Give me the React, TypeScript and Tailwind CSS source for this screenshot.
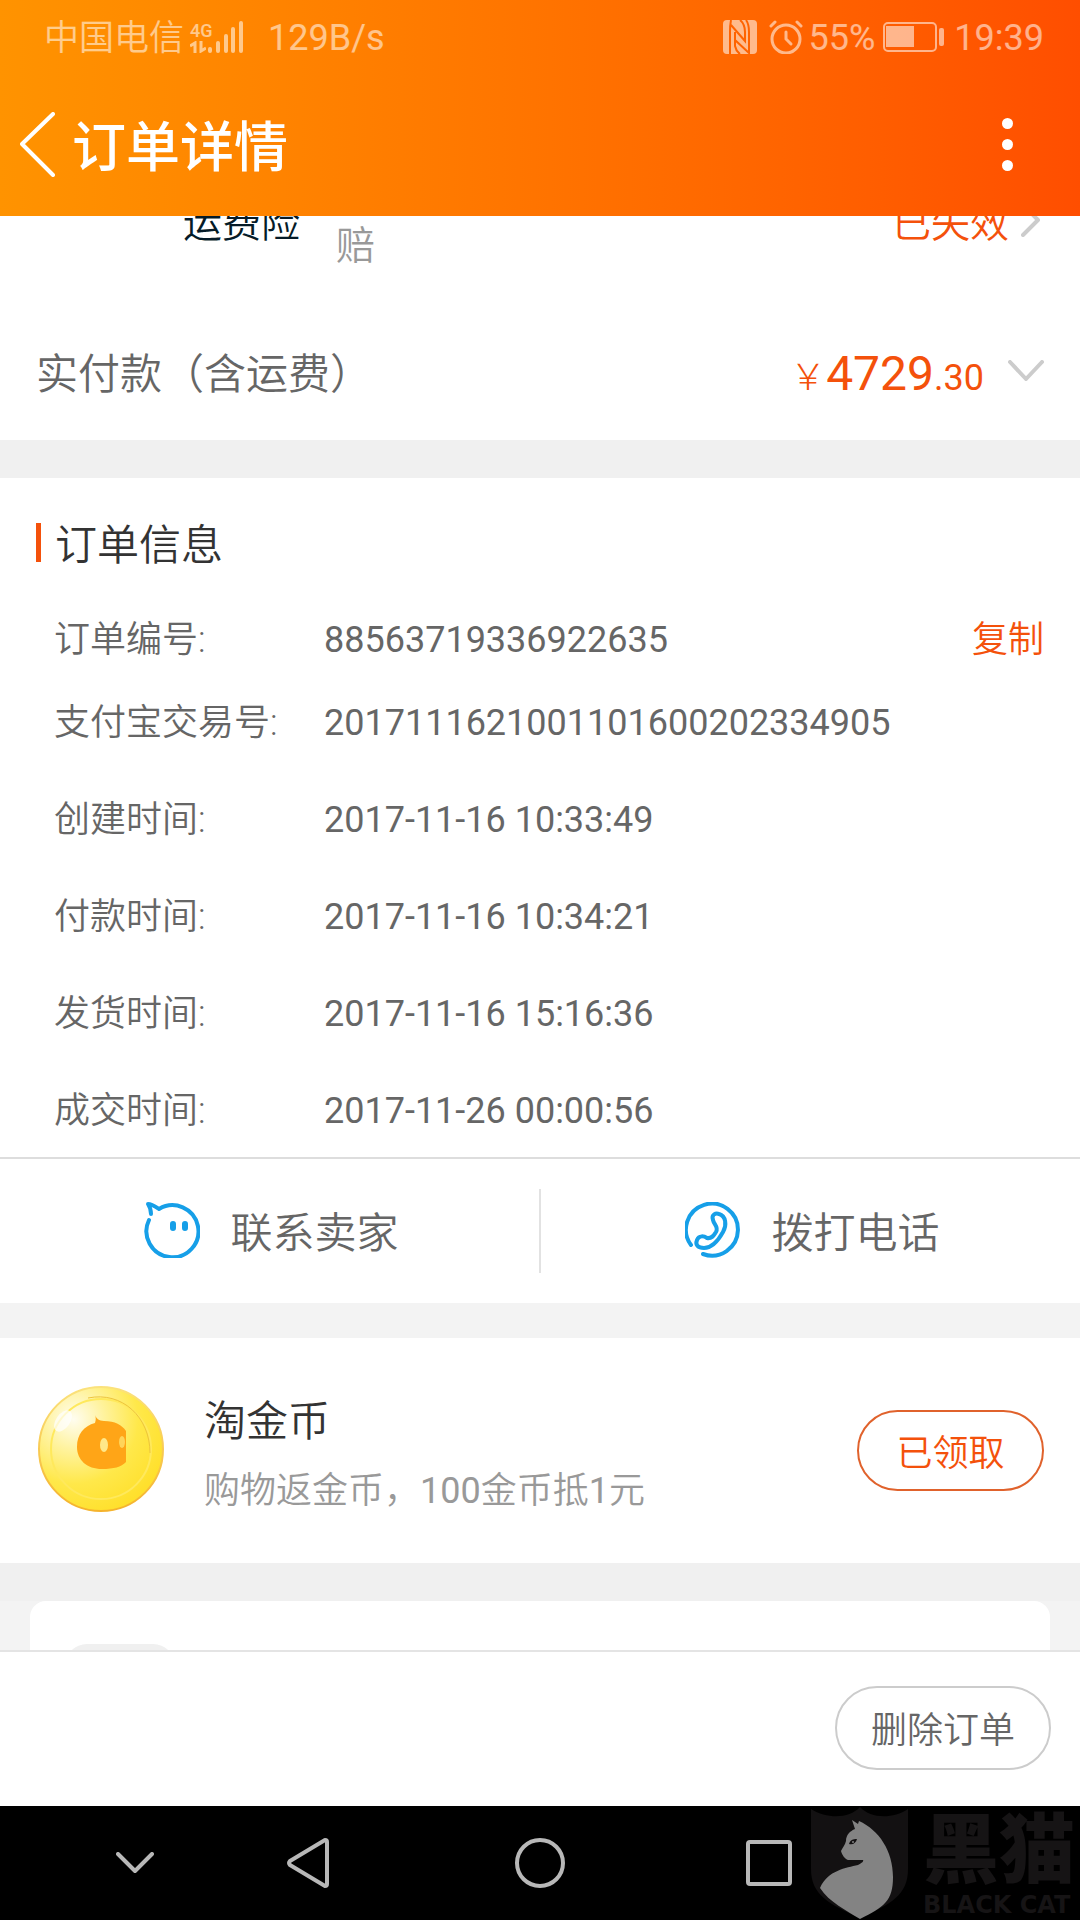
import type { ReactNode } from 'react';

interface OrderField {
  label: string;
  value: string;
  copyable?: boolean;
}

const orderFields: OrderField[] = [
  { label: '订单编号:', value: '88563719336922635', copyable: true },
  { label: '支付宝交易号:', value: '2017111621001101600202334905' },
  { label: '创建时间:', value: '2017-11-16 10:33:49' },
  { label: '付款时间:', value: '2017-11-16 10:34:21' },
  { label: '发货时间:', value: '2017-11-16 15:16:36' },
  { label: '成交时间:', value: '2017-11-26 00:00:56' },
];

function SignalIcon() {
  return (
    <svg width="36" height="34" viewBox="0 0 36 34" stroke="currentColor" strokeWidth="4" strokeLinecap="round">
      <path d="M2 31v-2M10 31v-8M18 31V16M25 31V9M33 31V3" />
    </svg>
  );
}

function NfcIcon() {
  return (
    <svg width="34" height="34" viewBox="0 0 34 34">
      <rect width="34" height="34" rx="4" fill="currentColor" />
      <path
        d="M8 0Q7 5 7 12V34M8 5L22 21V12Q22 4 17 0M12 12V20L26 33V12Q26 4 23 0M12 19V26Q13 31 17 34"
        fill="none"
        stroke="#ff6300"
        strokeWidth="2"
      />
    </svg>
  );
}

function AlarmIcon() {
  return (
    <svg width="34" height="34" viewBox="0 0 34 34" fill="none" stroke="currentColor" strokeWidth="3" strokeLinecap="round">
      <circle cx="17" cy="19" r="14" />
      <path d="M2 6L6 2M32 6L28 2" />
      <path d="M17 12v7l5 5" />
    </svg>
  );
}

function BatteryIcon() {
  return (
    <svg width="61" height="30" viewBox="0 0 61 30" fill="currentColor">
      <rect x="1" y="1" width="52" height="28" rx="4" fill="none" stroke="currentColor" strokeWidth="2" />
      <rect x="3" y="4" width="28" height="21" />
      <rect x="56" y="6" width="5" height="18" rx="2" />
    </svg>
  );
}

function ChatIcon() {
  return (
    <svg width="56" height="56" viewBox="0 0 56 56" fill="none" stroke="#169fe8" strokeWidth="4" strokeLinecap="round" strokeLinejoin="round">
      <path d="M5 18A26 26 0 1 0 15 7C12 5 8 2 4 2C6 5 7 8 7 12" />
      <path d="M29 22v4M41 22v4" strokeWidth="6" />
    </svg>
  );
}

function PhoneIcon() {
  return (
    <svg width="56" height="56" viewBox="0 0 56 56" fill="none" stroke="#169fe8" strokeWidth="4" strokeLinecap="round" strokeLinejoin="round">
      <path d="M6 43A26 26 0 1 1 18 52" />
      <path d="M28 18C26 12 31 11 34 12C41 14 42 23 38 30C33 39 26 46 19 46C13 46 10 43 12 38C14 33 19 34 22 36C27 37 29 33 31 30C34 25 29 23 28 18Z" />
    </svg>
  );
}

function CoinIcon() {
  return (
    <svg width="126" height="128" viewBox="0 0 126 128">
      <defs>
        <radialGradient id="coin" cx="0.28" cy="0.26" r="0.8">
          <stop offset="0" stopColor="#fffdf0" />
          <stop offset="0.3" stopColor="#fff3a0" />
          <stop offset="0.65" stopColor="#ffe84a" />
          <stop offset="1" stopColor="#ffe02c" />
        </radialGradient>
        <linearGradient id="rim" x1="0" y1="0" x2="0" y2="1">
          <stop offset="0" stopColor="#fbe27c" />
          <stop offset="1" stopColor="#f5b32c" />
        </linearGradient>
      </defs>
      <circle cx="63" cy="64" r="62" fill="url(#coin)" stroke="url(#rim)" strokeWidth="2" />
      <circle cx="63" cy="64" r="50" fill="none" stroke="#ffe95c" strokeWidth="2" />
      <path d="M50 13C84 6 112 32 112 68" fill="none" stroke="#edc43c" strokeWidth="1" />
      <ellipse cx="25" cy="36" rx="7" ry="12" fill="#fff" opacity="0.7" transform="rotate(35 25 36)" />
      <path d="M57 30C58 33 61 36 66 36C77 36 84 40 88 46V77C83 82 76 84 64 84C49 84 39 75 39 62C39 49 46 41 57 38C58 35 58 32 57 30Z" fill="#ffa517" />
      <ellipse cx="66" cy="60" rx="4" ry="7" fill="#ffe88a" />
      <ellipse cx="84" cy="57" rx="3" ry="6" fill="#ffd45a" />
    </svg>
  );
}

function CatShield() {
  return (
    <svg width="98" height="112" viewBox="0 0 98 112">
      <path d="M0 2C16 12 38 12 49 0C60 12 82 12 97 2V62C97 88 80 97 49 111C18 97 0 88 0 62Z" fill="#131112" />
      <path d="M41 13L47 17L48 14C68 23 82 44 82 70C82 94 73 100 49 112C36 104 18 95 9 81C17 63 35 61 47 58C51 56 53 54 52 53H37C34 52 31 48 30 44C32 40 34 38 35 34C35 28 39 24 44 22Z" fill="#838383" />
      <path d="M38 37C39 33 42 32 46 32C45 36 42 38 38 37Z" fill="#131112" />
      <circle cx="42" cy="35" r="1" fill="#838383" />
    </svg>
  );
}

function Chevron({ d, width, height, color }: { d: string; width: number; height: number; color: string }) {
  return (
    <svg width={width} height={height} viewBox={`0 0 ${width} ${height}`} fill="none" stroke={color} strokeWidth="4" strokeLinecap="round" strokeLinejoin="round">
      <path d={d} />
    </svg>
  );
}

function StatusBar() {
  return (
    <div className="flex h-[74px] items-center justify-between pl-11 pr-9 text-4xl/[42px] font-normal text-white/55">
      <div className="flex items-center">
        <span className="pt-1 text-[35px]/[42px] font-[350]">中国电信</span>
        <div className="ml-1.5 flex w-[22px] flex-col items-start">
          <span className="text-lg/[20px] font-medium">4G</span>
          <svg width="16" height="12" viewBox="0 0 16 12" fill="none" stroke="currentColor" strokeWidth="3">
            <path d="M5 12V2L0 5M11 0V10L16 7" />
          </svg>
        </div>
        <div className="-ml-1">
          <SignalIcon />
        </div>
        <span className="ml-6 pt-0.5">129B/s</span>
      </div>
      <div className="flex items-center">
        <NfcIcon />
        <span className="ml-3">
          <AlarmIcon />
        </span>
        <span className="ml-1.5 pt-0.5">55%</span>
        <span className="ml-2">
          <BatteryIcon />
        </span>
        <span className="ml-2.5 pt-0.5">19:39</span>
      </div>
    </div>
  );
}

function ActionButton({ icon, children }: { icon: ReactNode; children: ReactNode }) {
  return (
    <button type="button" className="flex h-full flex-1 items-center justify-center gap-[30px] pl-1 text-[42px]/[60px] text-[#666]">
      <span className="pb-0.5">{icon}</span>
      <span className="pt-1.5">{children}</span>
    </button>
  );
}

export default function App() {
  return (
    <div className="flex h-screen flex-col overflow-hidden bg-white font-[Roboto,'Noto_Sans_CJK_SC',sans-serif] font-[350]">
      <header className="h-[216px] shrink-0 bg-linear-to-r from-[#ff9300] to-[#ff4e00]">
        <StatusBar />
        <div className="flex h-[142px] items-center justify-between pb-0.5 pl-5 pr-[67px] text-white">
          <div className="flex items-center gap-[17px]">
            <button type="button" aria-label="返回">
              <Chevron d="M33 2L2 32L33 63" width={35} height={65} color="#fff" />
            </button>
            <h1 className="pt-2.5 text-[54px]/[72px] font-medium">订单详情</h1>
          </div>
          <button type="button" aria-label="更多" className="flex flex-col gap-2.5">
            <span className="size-[11px] rounded-full bg-white" />
            <span className="size-[11px] rounded-full bg-white" />
            <span className="size-[11px] rounded-full bg-white" />
          </button>
        </div>
      </header>

      <main className="min-h-0 flex-1 overflow-hidden bg-[#f0f0f0]">
        <section className="bg-white">
          <div className="-mt-[19px] flex h-[91px] pl-[183px] pr-10 text-[39px]/[54px]">
            <span className="w-[153px] text-[#051b28]">运费险</span>
            <span className="flex-1 self-start pt-[22px] text-[#999]">赔</span>
            <a href="#insurance" className="flex items-start gap-3 text-[#f4510b]">
              已失效
              <span className="pt-1.5">
                <Chevron d="M2 2L17 17L2 32" width={19} height={34} color="#ccc" />
              </span>
            </a>
          </div>
          <div className="flex h-[152px] items-center justify-between px-9 pt-[13px] text-[42px]/[60px] text-[#666]">
            <span className="pt-[9px]">实付款（含运费）</span>
            <button type="button" className="flex items-center gap-6 text-[#f4510b]">
              <span className="pt-[7px] text-5xl/[60px] font-normal">
                <span className="text-4xl font-light">￥</span>4729<span className="text-4xl">.30</span>
              </span>
              <Chevron d="M2 2L18 19L34 2" width={36} height={21} color="#ccc" />
            </button>
          </div>
        </section>

        <section className="mt-[38px] bg-white pt-[30px]">
          <div className="flex items-center gap-3.5 pl-9">
            <span className="h-[39px] w-[5px] bg-[#f4510b]" />
            <h2 className="pt-2 text-[42px]/[60px] text-[#333]">订单信息</h2>
          </div>
          <dl className="mt-[43px] pb-[25px] pl-[54px] pr-9 text-4xl/[42px] text-[#666]">
            {orderFields.map((field) => (
              <div key={field.label} className="mt-[55px] flex first:mt-0 nth-2:mt-[41px]">
                <dt className="w-[270px]">{field.label}</dt>
                <dd className="flex-1 font-normal">{field.value}</dd>
                {field.copyable && (
                  <dd>
                    <button type="button" className="text-[#f4510b]">复制</button>
                  </dd>
                )}
              </div>
            ))}
          </dl>
          <div className="flex h-[146px] items-center border-t-2 border-[#ddd]">
            <ActionButton icon={<ChatIcon />}>联系卖家</ActionButton>
            <span className="h-[84px] w-0.5 bg-[#e2e2e2]" />
            <ActionButton icon={<PhoneIcon />}>拨打电话</ActionButton>
          </div>
        </section>

        <div className="bg-[#f3f3f3] pt-[35px]">
          <section className="flex h-[225px] items-center bg-white pl-[38px] pr-9">
            <div className="pb-1">
              <CoinIcon />
            </div>
            <div className="ml-10 flex flex-1 flex-col gap-3.5 pt-1.5">
              <h3 className="text-[42px]/[60px] text-[#333]">淘金币</h3>
              <p className="text-4xl/[50px] text-[#999]">
                购物返金币，<span className="font-normal">100</span>金币抵<span className="font-normal">1</span>元
              </p>
            </div>
            <button type="button" className="h-[81px] w-[187px] rounded-full border-2 border-[#e0622c] pt-1.5 text-4xl text-[#f4510b]">
              已领取
            </button>
          </section>
        </div>

        {/* next card is scrolled mostly out of view */}
        <div className="mt-[38px] bg-[#f3f3f3] px-[30px]">
          <div className="h-60 rounded-2xl bg-white pl-[35px] pt-[43px]">
            <div className="size-[110px] rounded-[22px] bg-[#f0f0f0]" />
          </div>
        </div>
      </main>

      <footer className="flex h-[156px] shrink-0 items-center justify-end border-t-2 border-[#e4e4e4] pb-0.5 pr-[29px]">
        <button type="button" className="h-[84px] w-[216px] rounded-full border-2 border-[#ccc] pt-1.5 text-4xl text-[#666]">
          删除订单
        </button>
      </footer>

      <nav className="grid h-[114px] shrink-0 grid-cols-[270fr_76fr_388fr_77fr_269fr] items-center bg-black">
        <button type="button" aria-label="收起" className="flex justify-center">
          <Chevron d="M2 2L19 19L36 2" width={38} height={22} color="#b8b8b8" />
        </button>
        <button type="button" aria-label="后退" className="flex justify-center">
          <svg width="44" height="52" viewBox="0 0 44 52" fill="none" stroke="#b8b8b8" strokeWidth="4" strokeLinejoin="round">
            <path d="M39 3L4 24Q2 26 4 28L39 49Q41 49 41 47V5Q41 3 39 3Z" />
          </svg>
        </button>
        <button type="button" aria-label="主页" className="mx-auto size-[50px] rounded-full border-4 border-[#b8b8b8]" />
        <button type="button" aria-label="最近任务" className="ml-3 size-[46px] rounded border-4 border-[#b8b8b8]" />
        <div className="flex items-start gap-3.5">
          <CatShield />
          <div className="flex flex-col whitespace-nowrap pt-1 font-black text-[#161415]">
            <span className="text-[76px]/[80px]">黑猫</span>
            <span className="font-['DejaVu_Sans',sans-serif] text-2xl/[28px] font-bold">BLACK CAT</span>
          </div>
        </div>
      </nav>
    </div>
  );
}
